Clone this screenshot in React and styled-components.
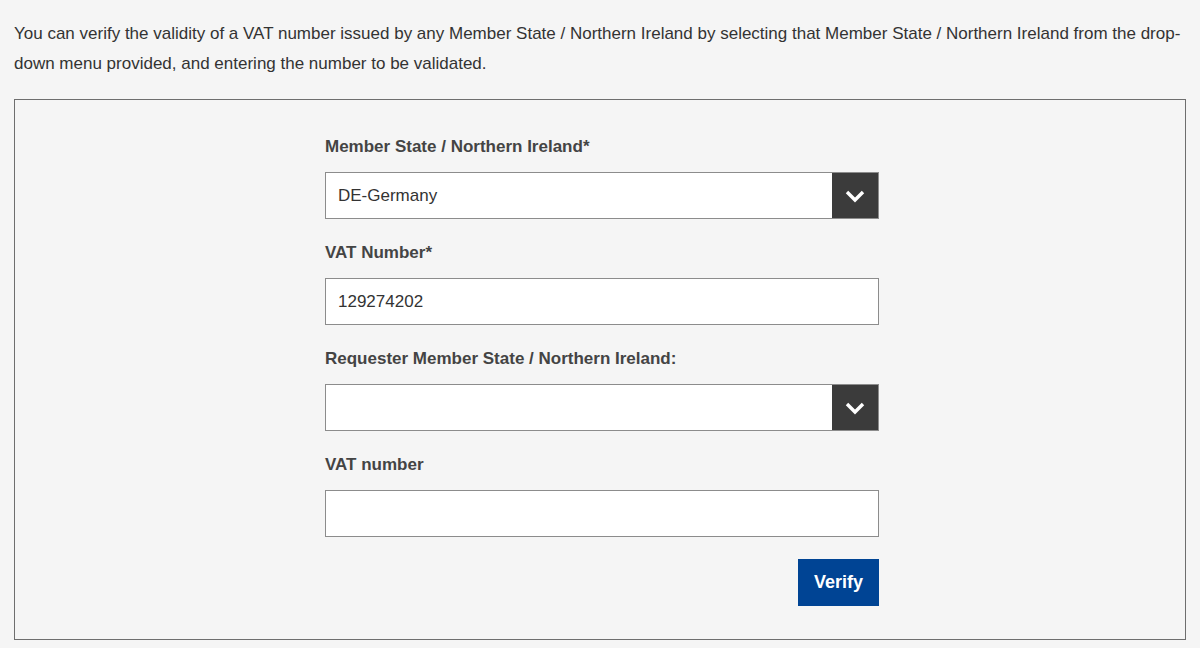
import styled, { createGlobalStyle } from "styled-components";

const GlobalStyle = createGlobalStyle`
  html, body {
    margin: 0;
    background: #f5f5f5;
  }
  body {
    font-family: "Liberation Sans", Arial, sans-serif;
    color: #333;
  }
`;

const Page = styled.div`
  padding: 19px 14px 0;
`;

const Intro = styled.p`
  margin: 0 0 20px;
  font-size: 17px;
  line-height: 30px;
  color: #333;
`;

const Panel = styled.form`
  border: 1px solid #6e6e6e;
  padding: 35px 0 33px;
  display: flex;
  justify-content: center;
`;

const Column = styled.div`
  width: 554px;
  margin-left: 4px;
  display: flex;
  flex-direction: column;
`;

const Field = styled.div`
  display: flex;
  flex-direction: column;
  margin-bottom: 22px;

  &:last-of-type {
    margin-bottom: 21px;
  }
`;

const Label = styled.label`
  font-size: 17px;
  line-height: 24px;
  font-weight: 700;
  color: #444;
  margin-bottom: 13px;
`;

const Box = styled.div`
  height: 47px;
  box-sizing: border-box;
  border: 1px solid #8c8c8c;
  background: #fff;
  display: flex;
  align-items: center;
`;

const Value = styled.span`
  flex: 1;
  padding: 0 12px;
  font-size: 17px;
  color: #333;
`;

const Arrow = styled.span`
  width: 46px;
  align-self: stretch;
  background: #3b3b3b;
  display: flex;
  align-items: center;
  justify-content: center;
`;

const Actions = styled.div`
  display: flex;
  justify-content: flex-end;
`;

const Button = styled.button`
  height: 47px;
  width: 81px;
  border: none;
  background: #004494;
  color: #fff;
  font-family: "Liberation Sans", Arial, sans-serif;
  font-size: 18px;
  font-weight: 700;
  cursor: pointer;
`;

function Chevron() {
  return (
    <svg width="22" height="14" viewBox="0 0 22 14">
      <path d="M3 3 L11 11 L19 3" fill="none" stroke="#fff" strokeWidth="3.4" />
    </svg>
  );
}

function SelectBox({ value }) {
  return (
    <Box>
      <Value>{value}</Value>
      <Arrow>
        <Chevron />
      </Arrow>
    </Box>
  );
}

function InputBox({ value }) {
  return (
    <Box>
      <Value>{value}</Value>
    </Box>
  );
}

export default function App() {
  return (
    <>
      <GlobalStyle />
      <Page>
        <Intro>
          You can verify the validity of a VAT number issued by any Member State / Northern Ireland by
          selecting that Member State / Northern Ireland from the drop-down menu provided, and entering
          the number to be validated.
        </Intro>
        <Panel onSubmit={(e) => e.preventDefault()}>
          <Column>
            <Field>
              <Label>Member State / Northern Ireland*</Label>
              <SelectBox value="DE-Germany" />
            </Field>
            <Field>
              <Label>VAT Number*</Label>
              <InputBox value="129274202" />
            </Field>
            <Field>
              <Label>Requester Member State / Northern Ireland:</Label>
              <SelectBox value="" />
            </Field>
            <Field>
              <Label>VAT number</Label>
              <InputBox value="" />
            </Field>
            <Actions>
              <Button type="submit">Verify</Button>
            </Actions>
          </Column>
        </Panel>
      </Page>
    </>
  );
}
